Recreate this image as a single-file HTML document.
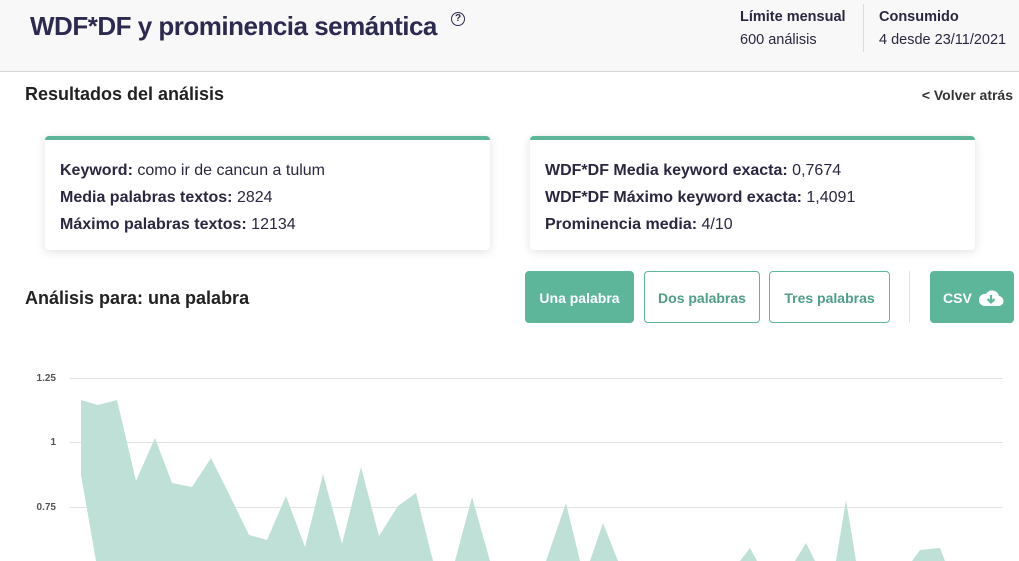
<!DOCTYPE html>
<html><head><meta charset="utf-8"><style>
*{margin:0;padding:0;box-sizing:border-box}
body{width:1019px;height:561px;overflow:hidden;background:#fff;font-family:"Liberation Sans",sans-serif;color:#2a2740;position:relative}
.hdr{position:absolute;left:0;top:0;width:1019px;height:72px;background:#f8f8f8;border-bottom:1px solid #d6d6d6}
.title{position:absolute;left:30px;top:11px;font-size:26px;font-weight:bold;color:#2d2a4f;letter-spacing:-0.5px}
.q{position:absolute;left:451px;top:12px;width:14px;height:14px;border:1.6px solid #2d2a4f;border-radius:50%;font-size:10px;font-weight:bold;text-align:center;line-height:11px}
.st{position:absolute;top:6px;font-size:14.5px;line-height:23px}
.st b{display:block}
.sep{position:absolute;left:863px;top:4px;width:1px;height:48px;background:#ddd}
.h2{position:absolute;font-size:18px;font-weight:bold;color:#222}
.back{position:absolute;right:6px;top:87px;font-size:14px;font-weight:bold;color:#333}
.card{position:absolute;top:136px;height:114px;background:#fff;border-top:4px solid #5db59a;border-radius:4px;box-shadow:0 2px 10px rgba(0,0,0,.12);padding:17px 15px;font-size:16px;line-height:27px}
.btn{position:absolute;top:271px;height:52px;border:1px solid #5db59a;border-radius:4px;color:#4f9e86;font-weight:bold;font-size:14px;text-align:center;line-height:52px}
.btn.f{background:#5db59a;color:#fff}
.yl{position:absolute;font-size:10px;font-weight:bold;color:#555;text-align:right;width:30px;left:26px}
.gl{position:absolute;left:70px;width:933px;height:1px;background:#e3e3e3}
</style></head><body>
<div class="hdr">
<div class="title">WDF*DF y prominencia semántica</div>
<div class="q">?</div>
<div class="st" style="left:740px"><b>Límite mensual</b>600 análisis</div>
<div class="sep"></div>
<div class="st" style="left:879px"><b>Consumido</b>4 desde 23/11/2021</div>
</div>
<div class="h2" style="left:25px;top:84px">Resultados del análisis</div>
<div class="back">&lt; Volver atrás</div>
<div class="card" style="left:45px;width:445px"><b>Keyword:</b> como ir de cancun a tulum<br><b>Media palabras textos:</b> 2824<br><b>Máximo palabras textos:</b> 12134</div>
<div class="card" style="left:530px;width:445px"><b>WDF*DF Media keyword exacta:</b> 0,7674<br><b>WDF*DF Máximo keyword exacta:</b> 1,4091<br><b>Prominencia media:</b> 4/10</div>
<div class="h2" style="left:25px;top:288px">Análisis para: una palabra</div>
<div class="btn f" style="left:525px;width:109px">Una palabra</div>
<div class="btn" style="left:644px;width:116px">Dos palabras</div>
<div class="btn" style="left:769px;width:121px">Tres palabras</div>
<div style="position:absolute;left:909px;top:271px;width:1px;height:52px;background:#e3e3e3"></div>
<div class="btn f" style="left:930px;width:84px;text-align:left;padding-left:12px">CSV
<svg style="position:absolute;left:47px;top:17px" width="26" height="18" viewBox="0 0 26 18"><path d="M6 17h14a5 5 0 0 0 1-10 7 7 0 0 0-13-2 5 5 0 0 0-2 12z" fill="#fff"/><path d="M13 6v7M9.5 10l3.5 3.5 3.5-3.5" stroke="#5db59a" stroke-width="2.2" fill="none"/></svg></div>
<div class="gl" style="top:378px"></div>
<div class="gl" style="top:442px"></div>
<div class="gl" style="top:507px"></div>
<div class="yl" style="top:373px">1.25</div>
<div class="yl" style="top:437px">1</div>
<div class="yl" style="top:502px">0.75</div>
<svg style="position:absolute;left:0;top:0" width="1019" height="561">
<polygon fill="#bfe0d7" points="81,475 81,400 98,405 117,400 136,481 155,438 172,483 192,487 211,458 230,496 249,535 267,540 286,496 305,547 323,474 342,544 361,467 379,536 398,506 416,493 433,561 455,561 472,497 490,561 546,561 566,503 580,561 590,561 603,523 618,561 740,561 750,548 757,561 795,561 806,543 815,561 836,561 846,500 856,561 912,561 920,550 940,548 945,561 96,561"/>
</svg>
</body></html>
